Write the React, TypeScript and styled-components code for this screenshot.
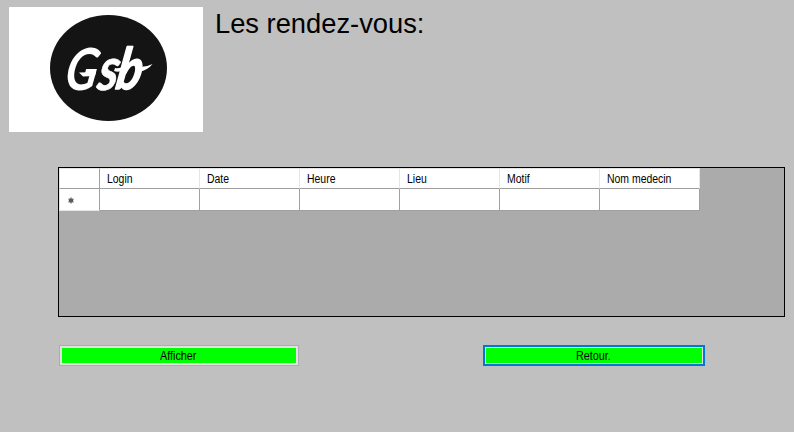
import React from "react";
import styled, { createGlobalStyle } from "styled-components";

const GlobalStyle = createGlobalStyle`
  * { box-sizing: border-box; }
  body {
    margin: 0;
    background: #c0c0c0;
    color: #000;
    font-family: "Liberation Sans", Arial, sans-serif;
    font-size: 12px;
  }
`;

const Form = styled.main`
  width: 794px;
  height: 432px;
  padding: 7px 9px 0;
  overflow: hidden;
`;

const Header = styled.header`
  display: flex;
  gap: 12px;
  height: 160px;
`;

const LogoPanel = styled.svg`
  display: block;
  width: 194px;
  height: 125px;
  background: #fff;
`;

const Script = styled.text<{ $size: number; $stroke: number }>`
  font-family: Lato, "Liberation Sans", sans-serif;
  font-size: ${(p) => p.$size}px;
  font-style: italic;
  font-weight: 700;
  fill: #fff;
  stroke: #fff;
  stroke-width: ${(p) => p.$stroke};
  stroke-linejoin: round;
`;

const Title = styled.h1`
  margin: 0;
  font-size: 27.3px;
  line-height: 34px;
  font-weight: 400;
  white-space: nowrap;
`;

const DataGrid = styled.section`
  width: 727px;
  height: 150px;
  margin-left: 49px;
  border: 1px solid #000;
  background: #ababab;
`;

const Row = styled.div<{ $height: number }>`
  display: grid;
  grid-template-columns: 41px repeat(6, 100px);
  grid-template-rows: ${(p) => p.$height}px;
  width: 641px;
`;

const HeadCell = styled.div<{ $line?: string }>`
  padding: 0 0 0 7px;
  line-height: 20px;
  background: #fff;
  border-top: 1px solid #e5e5e5;
  border-right: 1px solid ${(p) => p.$line ?? "#e5e5e5"};
  border-bottom: 1px solid #a0a0a0;
  white-space: nowrap;
`;

const CornerCell = styled(HeadCell)`
  border-left: 1px solid #e5e5e5;
`;

const Condensed = styled.span<{ $origin: string; $ratio: number }>`
  display: inline-block;
  transform: scaleX(${(p) => p.$ratio});
  transform-origin: ${(p) => p.$origin} center;
`;

const Cell = styled.div`
  background: #fff;
  border-right: 1px solid #a0a0a0;
  border-bottom: 1px solid #a0a0a0;
`;

const RowHeader = styled(Cell)`
  display: flex;
  align-items: center;
  padding: 2px 0 0 8px;
  border-left: 1px solid #e5e5e5;
  border-bottom-color: #e5e5e5;
`;

const Actions = styled.div`
  display: flex;
  gap: 184px;
  margin: 28px 0 0 50px;
`;

const Button = styled.button<{ $width: number; $focused?: boolean }>`
  width: ${(p) => p.$width}px;
  height: 21px;
  padding: 2px 2px 0 0;
  border: ${(p) => (p.$focused ? "2px solid #0078d7" : "1px solid #adadad")};
  box-shadow: inset 0 0 0 ${(p) => (p.$focused ? 1 : 2)}px #e1e1e1;
  background: #0f0;
  color: #000;
  font: 12px/15px "Liberation Sans", Arial, sans-serif;
`;

const columns = ["Login", "Date", "Heure", "Lieu", "Motif", "Nom medecin"];

function Logo() {
  return (
    <LogoPanel viewBox="0 0 194 125" role="img" aria-label="Gsb">
      <ellipse cx="99.5" cy="61" rx="58.5" ry="53" fill="#141414" />
      <Script $size={58} $stroke={0} transform="translate(54 83) skewX(-10) scale(.82 1)">G</Script>
      <path d="M70 65.5 L87 65 L86 69 L74 69.5Z" fill="#fff" />
      <Script $size={60} $stroke={0.6} transform="translate(87 82.5) skewX(-10) scale(.84 1)">s</Script>
      <Script $size={57} $stroke={1.6} transform="translate(105.5 82) skewX(-10) scale(.82 1)">b</Script>
      <path d="M106 61 Q112 62 115 58 L114 63 Q110 66 105 64Z" fill="#fff" />
      <path d="M127 59 Q136 61 143.5 57 Q139 63 130 65 L126 68Z" fill="#fff" />
    </LogoPanel>
  );
}

function NewRowMark() {
  return (
    <svg width="7" height="7" viewBox="0 0 7 7" aria-hidden="true">
      <circle cx="3" cy="3.5" r="2.1" fill="#484848" />
      <path d="M3 .5v6M.5 1.8l5 3.4M5.5 1.8L.5 5.2" stroke="#606060" strokeWidth="1.2" />
    </svg>
  );
}

export default function App() {
  return (
    <>
      <GlobalStyle />
      <Form>
        <Header>
          <Logo />
          <Title>Les rendez-vous:</Title>
        </Header>
        <DataGrid>
          <Row $height={21}>
            <CornerCell $line="#a0a0a0" />
            {columns.map((name) => (
              <HeadCell key={name}>
                <Condensed $origin="left" $ratio={0.87}>{name}</Condensed>
              </HeadCell>
            ))}
          </Row>
          <Row $height={22}>
            <RowHeader>
              <NewRowMark />
            </RowHeader>
            {columns.map((name) => (
              <Cell key={name} />
            ))}
          </Row>
        </DataGrid>
        <Actions>
          <Button $width={240}>
            <Condensed $origin="center" $ratio={0.9}>Afficher</Condensed>
          </Button>
          <Button $width={222} $focused>
            <Condensed $origin="center" $ratio={0.9}>Retour.</Condensed>
          </Button>
        </Actions>
      </Form>
    </>
  );
}
